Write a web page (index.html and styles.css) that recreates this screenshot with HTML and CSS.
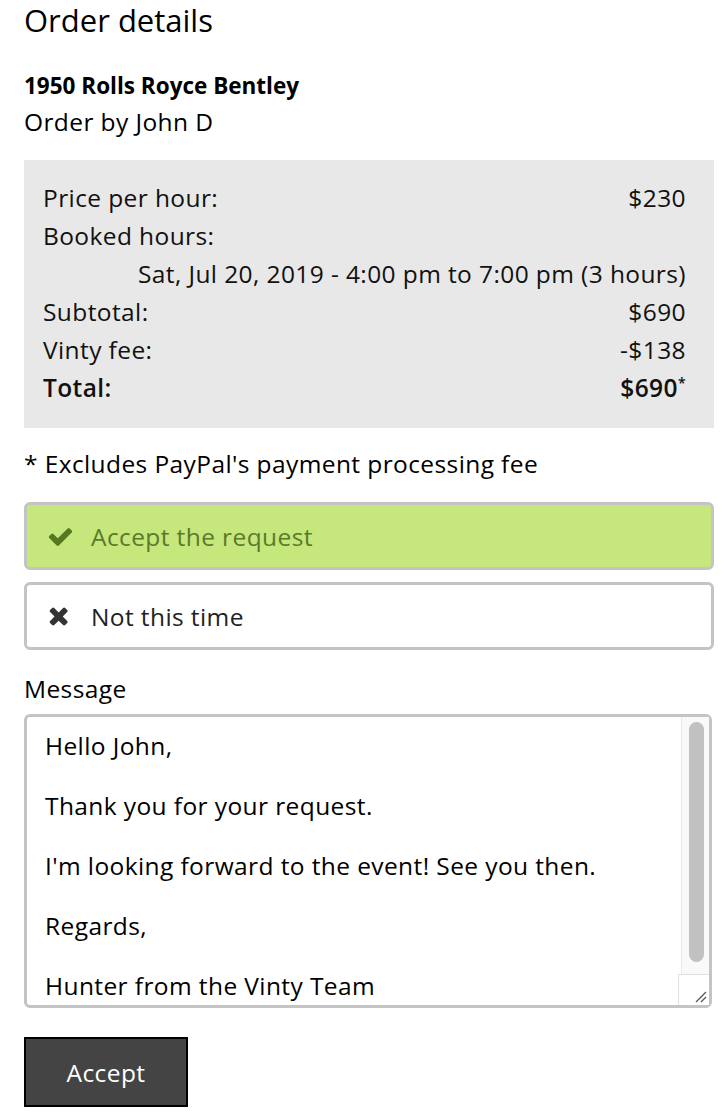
FILE: index.html
```html
<!DOCTYPE html>
<html>
<head>
<meta charset="utf-8">
<link rel="stylesheet" href="styles.css">
</head>
<body>
<main class="page">
  <h1 class="title">Order details</h1>
  <h2 class="car">1950 Rolls Royce Bentley</h2>
  <p class="orderby">Order by John D</p>

  <section class="summary">
    <div class="row"><span>Price per hour:</span><span>$230</span></div>
    <div class="row"><span>Booked hours:</span></div>
    <div class="row end"><span>Sat, Jul 20, 2019 - 4:00 pm to 7:00 pm (3 hours)</span></div>
    <div class="row"><span>Subtotal:</span><span>$690</span></div>
    <div class="row"><span>Vinty fee:</span><span>-$138</span></div>
    <div class="row total"><span>Total:</span><span>$690<sup>*</sup></span></div>
  </section>

  <p class="note">* Excludes PayPal's payment processing fee</p>

  <div class="choice accept">
    <svg class="icon check" viewBox="0 0 1792 1792"><path d="M1671 566q0 40-28 68l-724 724-136 136q-28 28-68 28t-68-28l-136-136-362-362q-28-28-28-68t28-68l136-136q28-28 68-28t68 28l294 295 656-657q28-28 68-28t68 28l136 136q28 28 28 68z"/></svg>
    <span>Accept the request</span>
  </div>
  <div class="choice decline">
    <svg class="icon times" viewBox="0 0 1408 1792"><path d="M1298 1322q0 40-28 68l-136 136q-28 28-68 28t-68-28l-294-294-294 294q-28 28-68 28t-68-28l-136-136q-28-28-28-68t28-68l294-294-294-294q-28-28-28-68t28-68l136-136q28-28 68-28t68 28l294 294 294-294q28-28 68-28t68 28l136 136q28 28 28 68t-28 68l-294 294 294 294q28 28 28 68z"/></svg>
    <span>Not this time</span>
  </div>

  <label class="label" for="msg">Message</label>
  <div class="field">
    <textarea id="msg" class="message">Hello John,

Thank you for your request.

I'm looking forward to the event! See you then.

Regards,

Hunter from the Vinty Team
</textarea>
    <div class="scrollbar"><div class="thumb"></div></div>
    <div class="grip">
      <svg viewBox="0 0 30 30"><path d="M27 17 L17 27 M27 22 L22 27" stroke="#555" stroke-width="1.3" fill="none"/></svg>
    </div>
  </div>

  <button class="submit">Accept</button>
</main>
</body>
</html>
```
FILE: styles.css
```css
html, body {
  margin: 0;
  padding: 0;
  background: #fff;
}
body {
  font-family: "Open Sans", "Lato", sans-serif;
  color: #111;
}
.page {
  padding: 0 14px 0 24px;
  display: flex;
  flex-direction: column;
  align-items: stretch;
}
.title {
  font-family: "Open Sans", sans-serif;
  font-weight: 400;
  font-size: 31px;
  line-height: 40px;
  margin: 0;
  color: #000;
}
.car {
  font-family: "Open Sans", sans-serif;
  font-weight: 700;
  font-size: 22.5px;
  line-height: 30px;
  margin: 31px 0 0 0;
  color: #000;
}
.orderby,
.row,
.note,
.choice,
.label,
.message,
.submit {
  font-size: 24.5px;
  letter-spacing: 0.4px;
}
.orderby {
  line-height: 30px;
  margin: 6px 0 0 0;
  color: #000;
}
.summary {
  margin-top: 23px;
  background: #e8e8e8;
  padding: 19px 28px 21px 19px;
  display: flex;
  flex-direction: column;
}
.row {
  display: flex;
  justify-content: space-between;
  line-height: 38px;
  height: 38px;
  color: #111;
}
.row.end {
  justify-content: flex-end;
}
.row.total {
  font-weight: 600;
}
.row sup {
  font-size: 14px;
  line-height: 0;
  vertical-align: 9px;
}
.note {
  line-height: 30px;
  margin: 21px 0 0 0;
  color: #000;
}
.choice {
  margin-top: 23px;
  height: 62px;
  border: 3px solid #c4c4c4;
  border-radius: 6px;
  display: flex;
  align-items: center;
  padding-left: 19.5px;
  box-sizing: content-box;
}
.choice + .choice {
  margin-top: 12px;
}
.choice.accept {
  background: #c5e77c;
  color: #5b7a2b;
}
.choice.decline {
  background: #fff;
  color: #222;
}
.icon {
  flex: none;
}
.check {
  width: 27px;
  height: 27px;
  margin-right: 17.5px;
}
.check path {
  fill: #577721;
}
.times {
  width: 21.3px;
  height: 27.2px;
  margin-left: 1.8px;
  margin-right: 21.4px;
}
.times path {
  fill: #333;
}
.label {
  line-height: 30px;
  margin-top: 24px;
  color: #000;
}
.field {
  position: relative;
  margin-top: 10px;
  margin-right: 2px;
}
.message {
  display: block;
  width: 100%;
  box-sizing: border-box;
  height: 294px;
  border: 3px solid #c4c4c4;
  border-radius: 6px;
  padding: 14px 40px 16px 18px;
  font-family: "Open Sans", "Lato", sans-serif;
  line-height: 30px;
  color: #000;
  resize: none;
  overflow: hidden;
  margin: 0;
}
.scrollbar {
  position: absolute;
  top: 3px;
  right: 3px;
  width: 28px;
  bottom: 34px;
  background: #f9f9f9;
  border-left: 1px solid #e8e8e8;
  box-sizing: border-box;
  padding: 5px 5px 0 7px;
}
.thumb {
  height: 240px;
  background: #c1c1c1;
  border-radius: 8px;
}
.grip {
  position: absolute;
  right: 3px;
  bottom: 3px;
  width: 31px;
  height: 31px;
  background: #fff;
  border-top: 1px solid #e0e0e0;
  border-left: 1px solid #e0e0e0;
  box-sizing: border-box;
}
.grip svg {
  display: block;
  width: 100%;
  height: 100%;
}
.submit {
  align-self: flex-start;
  margin-top: 29px;
  width: 164px;
  height: 70px;
  background: #444;
  border: 2px solid #000;
  border-radius: 0;
  color: #fff;
  font-family: "Open Sans", "Lato", sans-serif;
  padding: 0;
}
```
